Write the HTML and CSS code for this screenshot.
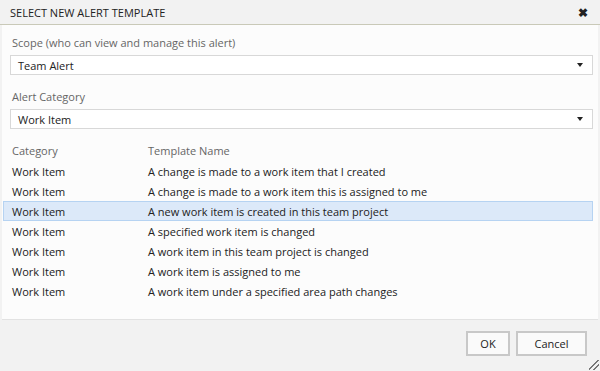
FILE: index.html
```html
<!DOCTYPE html>
<html lang="en">
<head>
    <meta charset="UTF-8">
    <title>Select New Alert Template</title>
    <link rel="stylesheet" href="styles.css">
</head>
<body>
    <div class="dialog">
        <div class="titlebar">
            <span class="title">SELECT NEW ALERT TEMPLATE</span>
            <span class="close">&#10006;</span>
        </div>
        <div class="content">
            <label class="label">Scope (who can view and manage this alert)</label>
            <div class="select"><span>Team Alert</span><span class="arrow"></span></div>
            <label class="label">Alert Category</label>
            <div class="select last"><span>Work Item</span><span class="arrow"></span></div>

            <div class="grid">
                <div class="row head"><span class="cat">Category</span><span>Template Name</span></div>
                <div class="row"><span class="cat">Work Item</span><span>A change is made to a work item that I created</span></div>
                <div class="row"><span class="cat">Work Item</span><span>A change is made to a work item this is assigned to me</span></div>
                <div class="row selected"><span class="cat">Work Item</span><span>A new work item is created in this team project</span></div>
                <div class="row"><span class="cat">Work Item</span><span>A specified work item is changed</span></div>
                <div class="row"><span class="cat">Work Item</span><span>A work item in this team project is changed</span></div>
                <div class="row"><span class="cat">Work Item</span><span>A work item is assigned to me</span></div>
                <div class="row"><span class="cat">Work Item</span><span>A work item under a specified area path changes</span></div>
            </div>
        </div>
        <div class="footer">
            <button class="ok">OK</button>
            <button class="cancel">Cancel</button>
            <span class="grip"></span>
        </div>
    </div>
</body>
</html>
```

FILE: styles.css
```css
html, body { margin: 0; padding: 0; }
body { font-family: "Open Sans", Arial, sans-serif; font-size: 11px; color: #222; background: #f2f2f2; }
.dialog { width: 600px; height: 371px; display: flex; flex-direction: column; background: #f2f2f2; }
.titlebar { height: 25px; display: flex; align-items: center; justify-content: space-between; padding: 0 12px 0 10px; border-bottom: 1px solid #c9c9b8; box-sizing: border-box; }
.title { font-size: 11px; color: #222; }
.close { font-size: 12px; font-weight: bold; color: #222; }
.content { background: #fcfcfc; margin: 0 2px 0 2px; padding: 10px 5px 14px 8px; border-bottom: 1px solid #e2e2e2; height: 295px; box-sizing: border-box; }
.label { display: block; color: #666; margin-left: 2px; line-height: 16px; margin-bottom: 4px; }
.select { height: 20px; box-sizing: border-box; border: 1px solid #d8d8d8; background: #fff; display: flex; align-items: center; justify-content: space-between; padding: 0 9px 0 7px; margin-bottom: 14px; }
.select.last { margin-bottom: 11px; }
.arrow { width: 0; height: 0; border-left: 3.5px solid transparent; border-right: 3.5px solid transparent; border-top: 4px solid #222; }
.row { display: flex; height: 20px; align-items: center; margin-left: -7px; padding-left: 8px; box-sizing: border-box; border: 1px solid transparent; }
.row.head { color: #666; margin-bottom: 1px; }
.row .cat { width: 136px; }
.row.selected { background: #dce9f9; border-color: #b6d3f2; }
.footer { flex: 1; display: flex; justify-content: flex-end; align-items: flex-start; padding: 11px 13px 0 0; position: relative; }
button { font-family: inherit; font-size: 11px; color: #222; background: #fafafa; border: 2px solid #c8c8c8; height: 25px; margin-left: 6px; cursor: pointer; }
.ok { width: 44px; }
.cancel { width: 71px; }
.grip { position: absolute; right: 1px; bottom: 1px; width: 10px; height: 10px; background: linear-gradient(135deg, transparent 45%, #777 45%, #777 52%, transparent 52%, transparent 70%, #777 70%, #777 77%, transparent 77%); }
```
